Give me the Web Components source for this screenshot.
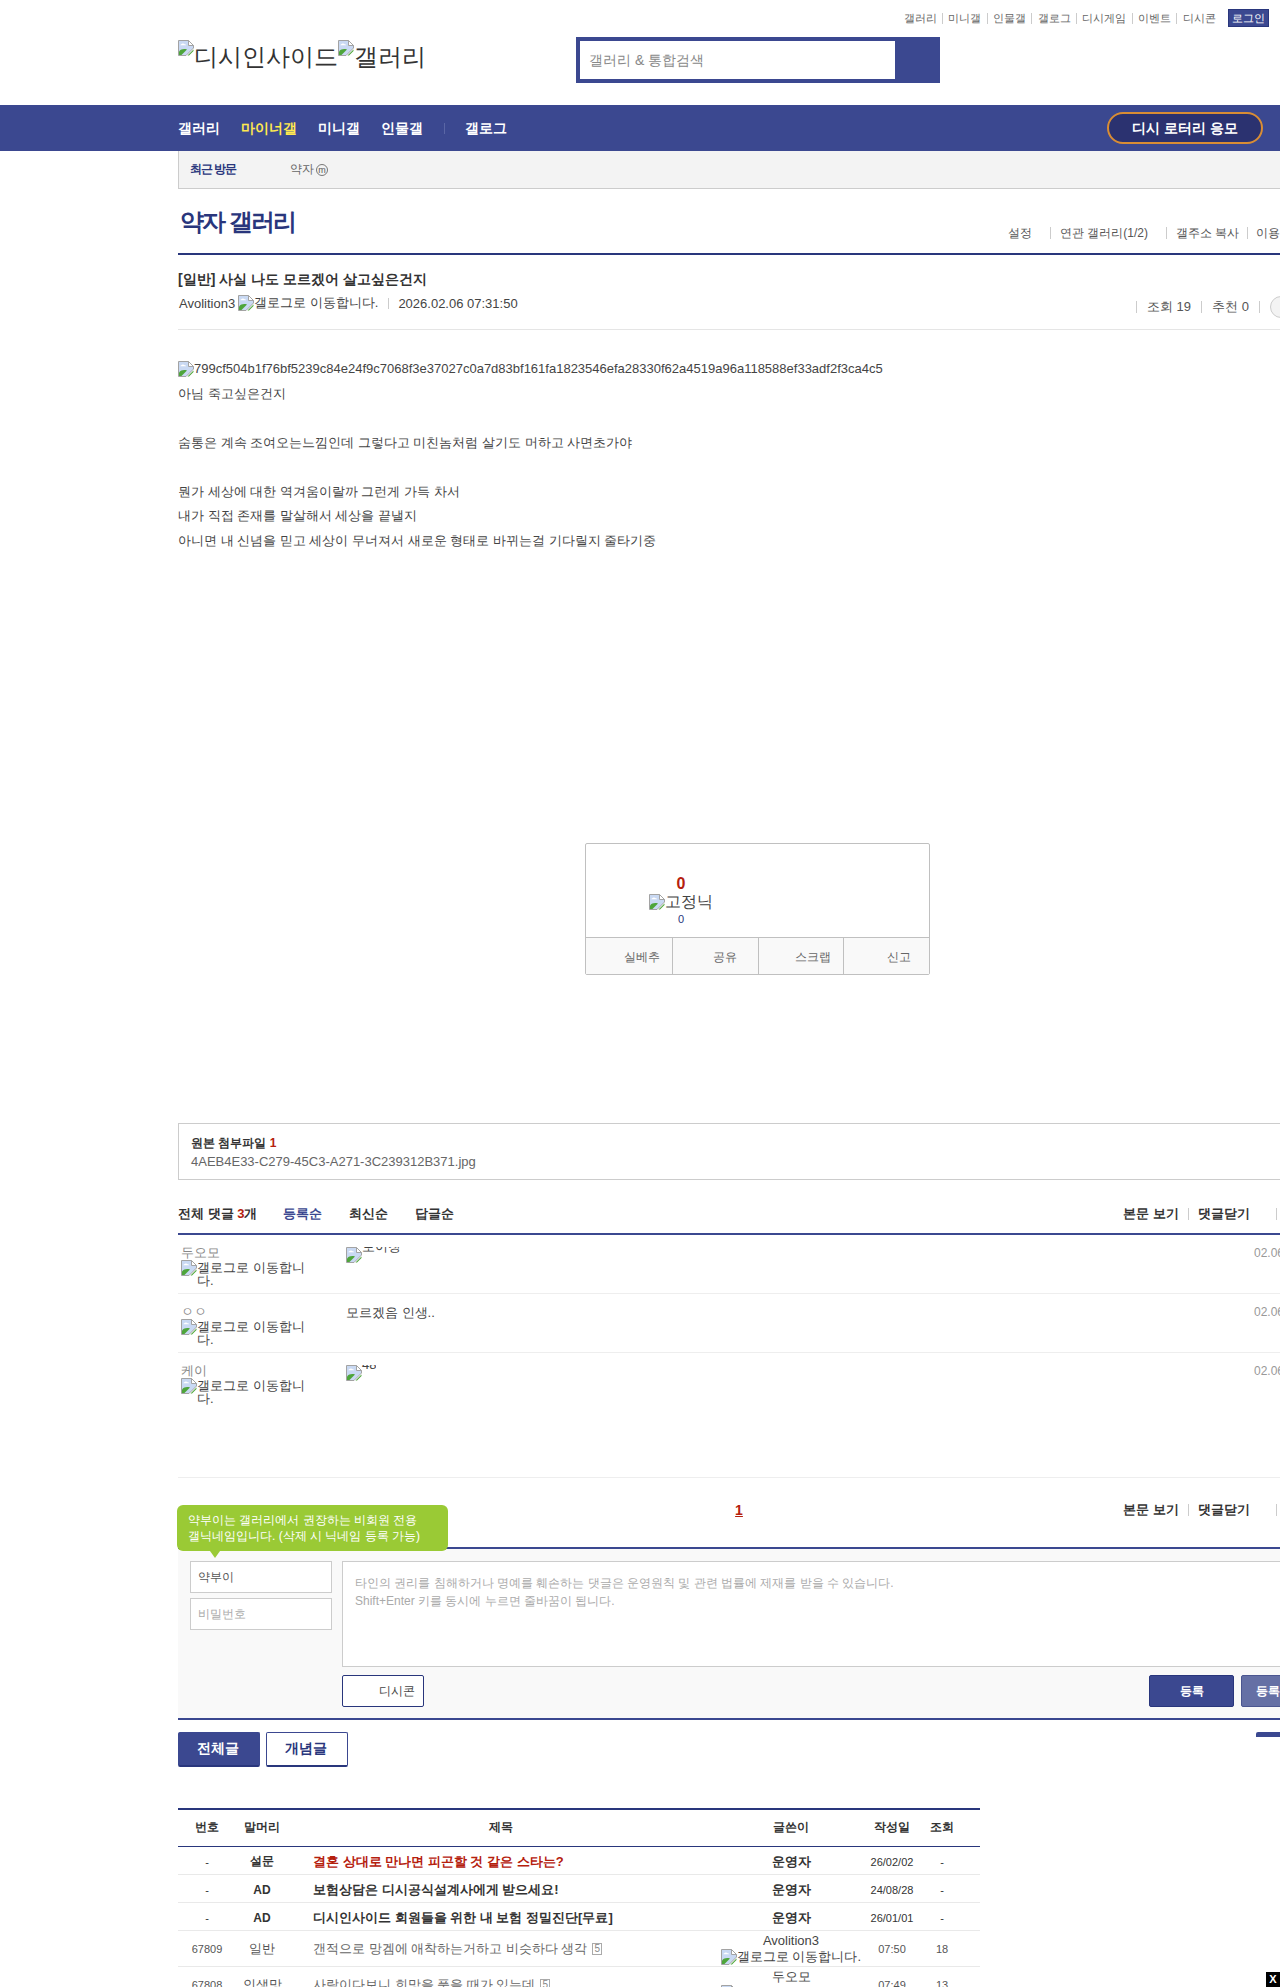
<!DOCTYPE html>
<html lang="ko">
<head>
<meta charset="utf-8">
<title>약자 갤러리</title>
<style>
  html, body { margin: 0; padding: 0; background: #fff; }
  body {
    width: 1280px; height: 1987px; overflow: hidden;
    font-family: "Liberation Sans", sans-serif;
    font-size: 13px; color: #333;
  }
  #wrap { width: 1160px; margin-left: 178px; }
  post-body p { margin: 0; height: 24.5px; }
  post-body broken-img { height: 24.5px; }
</style>
</head>
<body>
<site-header></site-header>
<main-nav></main-nav>
<div id="wrap">
  <recent-bar></recent-bar>
  <gall-title></gall-title>
  <post-head></post-head>
  <post-body>
    <p><broken-img alt="799cf504b1f76bf5239c84e24f9c7068f3e37027c0a7d83bf161fa1823546efa28330f62a4519a96a118588ef33adf2f3ca4c5"></broken-img></p>
    <p>아님 죽고싶은건지</p>
    <p>&nbsp;</p>
    <p>숨통은 계속 조여오는느낌인데 그렇다고 미친놈처럼 살기도 머하고 사면초가야</p>
    <p>&nbsp;</p>
    <p>뭔가 세상에 대한 역겨움이랄까 그런게 가득 차서</p>
    <p>내가 직접 존재를 말살해서 세상을 끝낼지</p>
    <p>아니면 내 신념을 믿고 세상이 무너져서 새로운 형태로 바뀌는걸 기다릴지 줄타기중</p>
  </post-body>
  <vote-box></vote-box>
  <file-box></file-box>
  <comment-head></comment-head>
  <comment-row date="02.06 07:44:02" h="59">
    <span slot="name">두오모</span>
    <broken-img slot="name" alt="갤로그로 이동합니다." wrap></broken-img>
    <broken-img alt="보이창" clipped></broken-img>
  </comment-row>
  <comment-row date="02.06 07:45:27" h="59">
    <span slot="name">ㅇㅇ</span>
    <broken-img slot="name" alt="갤로그로 이동합니다." wrap></broken-img>
    <div style="line-height:16px;margin-top:-1px">모르겠음 인생..</div>
  </comment-row>
  <comment-row date="02.06 07:51:40" h="125">
    <span slot="name">케이</span>
    <broken-img slot="name" alt="갤로그로 이동합니다." wrap></broken-img>
    <broken-img alt="48" clipped></broken-img>
  </comment-row>
  <pager-row></pager-row>
  <comment-form></comment-form>
  <tab-row></tab-row>
  <post-table>
    <list-row kind="notice" num="-" head="설문" date="26/02/02" count="-">
      <span slot="title" style="color:#b5200d">결혼 상대로 만나면 피곤할 것 같은 스타는?</span>
      <span slot="writer">운영자</span>
    </list-row>
    <list-row kind="notice" num="-" head="AD" date="24/08/28" count="-">
      <span slot="title">보험상담은 디시공식설계사에게 받으세요!</span>
      <span slot="writer">운영자</span>
    </list-row>
    <list-row kind="notice" num="-" head="AD" date="26/01/01" count="-">
      <span slot="title">디시인사이드 회원들을 위한 내 보험 정밀진단[무료]</span>
      <span slot="writer">운영자</span>
    </list-row>
    <list-row num="67809" head="일반" date="07:50" count="18" replies="5">
      <span slot="title">갠적으로 망겜에 애착하는거하고 비슷하다 생각</span>
      <span slot="writer">Avolition3</span>
      <broken-img slot="writer" alt="갤로그로 이동합니다."></broken-img>
    </list-row>
    <list-row num="67808" head="인생망" date="07:49" count="13" replies="5">
      <span slot="title">사람이다보니 희망을 품을 때가 있는데</span>
      <span slot="writer">두오모</span>
      <broken-img slot="writer" alt="갤로그로 이동합니다."></broken-img>
    </list-row>
  </post-table>
</div>
<close-badge></close-badge>

<script>
const NAVY = "#3b4890";
const DARK = "#29367c";

// 공통: 마크업을 shadow root에 넣어주는 베이스
class Comp extends HTMLElement {
  connectedCallback() {
    if (this.shadowRoot) return;
    this.attachShadow({ mode: "open" }).innerHTML = this.render();
  }
  attr(name, def = "") {
    return this.hasAttribute(name) ? this.getAttribute(name) : def;
  }
}

// 깨진 이미지 아이콘 + alt 텍스트
class BrokenImg extends Comp {
  render() {
    const alt = this.attr("alt");
    const wrap = this.hasAttribute("wrap");
    const clipped = this.hasAttribute("clipped");
    return `
      <style>
        :host { display: inline-flex; align-items: ${wrap || clipped ? "flex-start" : "center"}; vertical-align: top; }
        svg { width: 16px; height: 16px; flex: none; }
        span { ${wrap ? "word-break: break-all; line-height: 13px; margin-top: 1px;" : ""} }
        :host([clipped]) { height: 16px; overflow: hidden; }
        :host([clipped]) span { line-height: 16px; margin-top: -8px; color: #444; }
      </style>
      <svg viewBox="0 0 16 16" aria-hidden="true">
        <path d="M.5.5H10.5L15.5 5.5V8L8 15.5H.5Z" fill="#c9d9f3" stroke="#a3a3a3" stroke-width="1"/>
        <path d="M10.5.5V5.5H15.5Z" fill="#fff" stroke="#a3a3a3" stroke-width="1"/>
        <path d="M3 4.5c1-1.400 3-1.200 3.600-.2.9 0 1.400.5 1.400 1H2.400c-.1-.4.1-.7.6-.8Z" fill="#fff"/>
        <path d="M1 15V11.500C3 9 6 8.500 9 9.500L3.500 15Z" fill="#4ea53b"/>
        <path d="M15.500 9.500L9.500 15.500H11L15.500 11Z" fill="#4ea53b"/>
      </svg><span>${alt}</span>`;
  }
}

class SiteHeader extends Comp {
  render() {
    const links = ["갤러리", "미니갤", "인물갤", "갤로그", "디시게임", "이벤트", "디시콘"];
    return `
      <style>
        :host { display: block; height: 105px; box-sizing: border-box; }
        .top { display: flex; justify-content: flex-end; align-items: center; height: 18px; padding: 9px 11px 10px 0; font-size: 11px; color: #666; }
        .top a { padding: 0 5.33px; line-height: 11px; border-left: 1px solid #ccc; }
        .top a:first-child { border-left: 0; }
        .login { margin-left: 7px; width: 39px; height: 16px; line-height: 16px; text-align: center; background: ${NAVY}; border: 1px solid ${DARK}; color: #fff; }
        .row { display: grid; grid-template-columns: 398px 364px; padding-left: 178px; }
        .logo { display: flex; align-items: flex-start; padding-top: 3px; font-size: 24px; line-height: 34px; color: #333; white-space: nowrap; }
        .search { box-sizing: border-box; height: 46px; background: ${NAVY}; padding: 4px 45px 4px 4px; }
        .search div { height: 38px; line-height: 38px; background: #fff; padding-left: 9px; font-size: 14px; color: #888; }
      </style>
      <div class="top">
        ${links.map(l => `<a>${l}</a>`).join("")}
        <div class="login">로그인</div>
      </div>
      <div class="row">
        <div class="logo"><broken-img alt="디시인사이드" style="align-items:flex-start"></broken-img><broken-img alt="갤러리" style="align-items:flex-start"></broken-img></div>
        <div class="search"><div>갤러리 &amp; 통합검색</div></div>
      </div>`;
  }
}

class MainNav extends Comp {
  render() {
    return `
      <style>
        :host { display: flex; align-items: center; height: 46px; background: ${NAVY}; padding-left: 178px; color: #fff; font-size: 14px; font-weight: bold; }
        a { margin: 1px 21px 0 0; white-space: nowrap; }
        .on { color: #ffe94f; }
        i { width: 1px; height: 11px; background: #5a66a5; margin: 0 20px 0 0; }
        .lotto { margin: 0 17px 0 auto; box-sizing: border-box; width: 156px; height: 32px; line-height: 28px; text-align: center; background: #2b3270; border: 2px solid #d98d34; border-radius: 16px; }
      </style>
      <a>갤러리</a><a class="on">마이너갤</a><a>미니갤</a><a>인물갤</a><i></i><a>갤로그</a>
      <div class="lotto">디시 로터리 응모</div>`;
  }
}

class RecentBar extends Comp {
  render() {
    return `
      <style>
        :host { display: flex; align-items: center; box-sizing: border-box; height: 38px; background: #f3f3f3; border-left: 1px solid #ccc; border-bottom: 1px solid #ccc; padding-left: 11px; }
        b { width: 100px; font-size: 12px; letter-spacing: -1px; color: ${DARK}; }
        span { font-size: 12px; color: #666; display: flex; align-items: center; gap: 2px; }
        em { display: inline-block; width: 12px; height: 12px; line-height: 10px; border: 1px solid #777; border-radius: 50%; font-size: 9px; text-align: center; font-style: normal; box-sizing: border-box; color: #555; }
      </style>
      <b>최근 방문</b><span>약자 <em>m</em></span>`;
  }
}

class GallTitle extends Comp {
  render() {
    return `
      <style>
        :host { display: grid; grid-template-columns: 830px 1fr; height: 64px; border-bottom: 2px solid ${DARK}; }
        h2 { margin: 20px 0 0 2px; font-size: 24px; line-height: 26px; color: ${DARK}; letter-spacing: -2px; }
        .links { display: flex; align-items: center; height: 16px; margin-top: 36px; font-size: 12px; color: #555; white-space: nowrap; }
        .links i { width: 1px; height: 12px; background: #ccc; }
      </style>
      <h2>약자 갤러리</h2>
      <div class="links">
        <span style="margin-right:18px">설정</span><i></i>
        <span style="margin:0 18px 0 9px">연관 갤러리(1/2)</span><i></i>
        <span style="margin:0 8px 0 9px">갤주소 복사</span><i></i>
        <span style="margin-left:8px">이용 안내</span>
      </div>`;
  }
}

class PostHead extends Comp {
  render() {
    return `
      <style>
        :host { display: grid; grid-template-columns: 958px 1fr; height: 74px; border-bottom: 1px solid #e5e5e5; }
        h3 { margin: 15px 0 7px; font-size: 14px; line-height: 18px; color: #333; }
        .meta { display: flex; align-items: center; height: 16px; padding-left: 1px; font-size: 13px; color: #444; white-space: nowrap; }
        .meta broken-img { margin-left: 3px; }
        .meta i { width: 1px; height: 11px; background: #ccc; margin: 0 9px 0 10px; }
        .right { display: flex; align-items: center; height: 22px; margin-top: 41px; font-size: 13px; color: #555; white-space: nowrap; }
        .right i { width: 1px; height: 12px; background: #ccc; flex: none; }
        .round { flex: none; box-sizing: border-box; width: 60px; height: 22px; margin-left: 10px; background: #f3f3f3; border: 1px solid #ccc; border-radius: 11px; }
      </style>
      <div>
        <h3>[일반] 사실 나도 모르겠어 살고싶은건지</h3>
        <div class="meta">Avolition3<broken-img alt="갤로그로 이동합니다."></broken-img><i></i>2026.02.06 07:31:50</div>
      </div>
      <div class="right">
        <i></i><span style="margin:0 10px">조회 19</span><i></i><span style="margin:0 10px">추천 0</span><i></i><div class="round"></div>
      </div>`;
  }
}

class PostBody extends Comp {
  render() {
    return `
      <style>
        :host { display: block; box-sizing: border-box; height: 513px; padding-top: 27px; font-size: 13px; line-height: 24.5px; color: #444; }
      </style>
      <slot></slot>`;
  }
}

class VoteBox extends Comp {
  render() {
    const cells = [["실베추", 12], ["공유", 21], ["스크랩", 12], ["신고", 18]];
    return `
      <style>
        :host { display: block; box-sizing: border-box; width: 345px; height: 132px; margin: 0 0 148px 407px; border: 1px solid #c0c0c0; border-radius: 2px; background: #fff; }
        .top { box-sizing: border-box; height: 93px; width: 190px; padding-top: 31px; display: flex; flex-direction: column; align-items: center; }
        .n { font-size: 16px; line-height: 18px; font-weight: bold; color: #b5200d; }
        .g { font-size: 16px; line-height: 16px; color: #444; margin-top: 1px; }
        .c { font-size: 11px; line-height: 14px; margin-top: 2px; color: ${DARK}; }
        .cells { display: grid; grid-template-columns: repeat(4, 1fr); height: 36px; overflow: hidden; border-top: 1px solid #c0c0c0; background: #f9f9f9; }
        .cells div { box-sizing: border-box; height: 36px; border-left: 1px solid #c0c0c0; text-align: right; font-size: 12px; line-height: 39px; color: #666; }
        .cells div:first-child { border-left: 0; }
      </style>
      <div class="top">
        <div class="n">0</div>
        <div class="g"><broken-img alt="고정닉"></broken-img></div>
        <div class="c">0</div>
      </div>
      <div class="cells">${cells.map(c => `<div style="padding-right:${c[1]}px">${c[0]}</div>`).join("")}</div>`;
  }
}

class FileBox extends Comp {
  render() {
    return `
      <style>
        :host { display: block; box-sizing: border-box; height: 57px; border: 1px solid #ccc; padding: 10px 12px; }
        b { display: block; font-size: 12px; line-height: 18px; color: #333; }
        b em { font-style: normal; color: #b5200d; }
        span { display: block; font-size: 13px; line-height: 20px; color: #666; }
      </style>
      <b>원본 첨부파일 <em>1</em></b>
      <span>4AEB4E33-C279-45C3-A271-3C239312B371.jpg</span>`;
  }
}

// 본문 보기 / 댓글닫기 링크 묶음
const VIEW_LINKS = `
  <div style="display:flex;align-items:center;font-size:13px;font-weight:bold;color:#333;white-space:nowrap">
    <span>본문 보기</span>
    <i style="width:1px;height:12px;background:#ccc;margin:0 9px"></i>
    <span>댓글닫기</span>
    <i style="width:1px;height:12px;background:#ccc;margin-left:26px"></i>
  </div>`;

class CommentHead extends Comp {
  render() {
    return `
      <style>
        :host { display: grid; grid-template-columns: 945px 1fr; height: 53px; border-bottom: 2px solid ${NAVY}; }
        .row { display: flex; height: 16px; margin-top: 26px; line-height: 16px; font-size: 13px; font-weight: bold; color: #333; white-space: nowrap; }
        em { font-style: normal; color: #b5200d; }
        .on { color: ${NAVY}; }
      </style>
      <div class="row">
        <span style="width:105px">전체 댓글 <em>3</em>개</span>
        <span class="on" style="width:66px">등록순</span>
        <span style="width:66px">최신순</span>
        <span>답글순</span>
      </div>
      <div class="row">${VIEW_LINKS}</div>`;
  }
}

class CommentRow extends Comp {
  render() {
    return `
      <style>
        :host { display: grid; grid-template-columns: 168px 908px 1fr; box-sizing: border-box; height: ${this.attr("h", "59")}px; padding-top: 11px; border-bottom: 1px solid #eee; }
        .name { width: 125px; padding-left: 3px; font-size: 13px; line-height: 14px; color: #888; display: flex; flex-direction: column; align-items: flex-start; }
        .name ::slotted(broken-img) { color: #444; }
        .body { font-size: 13px; color: #444; padding-top: 1px; }
        .date { font-size: 12px; line-height: 14px; color: #999; white-space: nowrap; }
      </style>
      <div class="name"><slot name="name"></slot></div>
      <div class="body"><slot></slot></div>
      <div class="date">${this.attr("date")}</div>`;
  }
}

class PagerRow extends Comp {
  render() {
    return `
      <style>
        :host { display: grid; grid-template-columns: 550px 395px 1fr; height: 69px; }
        .one { width: 20px; margin-top: 24px; margin-right: -21px; text-align: center; justify-self: end; font-size: 14px; line-height: 16px; font-weight: bold; color: #b5200d; text-decoration: underline; }
        .v { margin-top: 24px; line-height: 16px; grid-column: 3; }
      </style>
      <div class="one">1</div>
      <div class="v">${VIEW_LINKS}</div>`;
  }
}

class CommentForm extends Comp {
  render() {
    return `
      <style>
        :host { display: block; position: relative; box-sizing: border-box; height: 173px; background: #f9f9f9; border-top: 2px solid ${NAVY}; border-bottom: 2px solid ${NAVY}; padding: 12px 12px 0; }
        .tip { position: absolute; left: -1px; top: -44px; box-sizing: border-box; width: 271px; height: 46px; padding: 7px 11px; background: #9aca35; border-radius: 6px; color: #fff; font-size: 12px; line-height: 16px; white-space: nowrap; }
        .tip::after { content: ""; position: absolute; left: 33px; top: 46px; border: 5px solid transparent; border-top: 7px solid #9aca35; border-bottom: 0; }
        .grid { display: grid; grid-template-columns: 142px 1fr; column-gap: 10px; }
        .inputs { display: flex; flex-direction: column; gap: 5px; }
        .inputs div { box-sizing: border-box; height: 32px; line-height: 30px; background: #fff; border: 1px solid #ccc; padding-left: 7px; font-size: 12px; color: #aaa; }
        .inputs .v { color: #555; }
        .text { box-sizing: border-box; height: 106px; background: #fff; border: 1px solid #ccc; padding: 12px; font-size: 12px; line-height: 18px; color: #aaa; }
        .btns { display: flex; grid-column: 2; margin-top: 8px; gap: 7px; }
        .btns div { box-sizing: border-box; height: 32px; border-radius: 2px; font-size: 12px; line-height: 30px; text-align: center; white-space: nowrap; }
        .btns .dc { width: 82px; background: #fff; border: 1px solid ${DARK}; color: #444; text-align: right; padding-right: 8px; margin-right: auto; }
        .ok { width: 85px; background: ${NAVY}; border: 1px solid ${DARK}; color: #fff; font-weight: bold; }
        .ok2 { width: 85px; background: #6570a5; border: 1px solid #4b5690; color: #fff; font-weight: bold; }
      </style>
      <div class="tip">약부이는 갤러리에서 권장하는 비회원 전용<br>갤닉네임입니다. (삭제 시 닉네임 등록 가능)</div>
      <div class="grid">
        <div class="inputs">
          <div class="v">약부이</div>
          <div>비밀번호</div>
        </div>
        <div class="text">타인의 권리를 침해하거나 명예를 훼손하는 댓글은 운영원칙 및 관련 법률에 제재를 받을 수 있습니다.<br>Shift+Enter 키를 동시에 누르면 줄바꿈이 됩니다.</div>
        <div class="btns">
          <div class="dc">디시콘</div>
          <div class="ok">등록</div>
          <div class="ok2">등록+추천</div>
        </div>
      </div>`;
  }
}

class TabRow extends Comp {
  render() {
    return `
      <style>
        :host { display: flex; gap: 6px; margin-top: 12px; height: 35px; font-size: 14px; font-weight: bold; }
        div { box-sizing: border-box; width: 82px; height: 35px; padding-right: 2px; line-height: 31px; text-align: center; border: 1px solid ${NAVY}; border-bottom-width: 2px; border-radius: 2px; border-bottom-color: ${DARK}; }
        .on { background: ${NAVY}; color: #fff; }
        .off { background: #fff; color: ${DARK}; }
        .edge { margin-left: auto; width: 82px; height: 5px; background: ${NAVY}; border: 0; border-radius: 2px 2px 0 0; }
      </style>
      <div class="on">전체글</div><div class="off">개념글</div><div class="edge"></div>`;
  }
}

const COLS = "56px 56px 422px 158px 44px 66px";

class PostTable extends Comp {
  render() {
    return `
      <style>
        :host { display: block; width: 802px; margin-top: 41px; border-top: 2px solid ${DARK}; }
        .h { display: grid; grid-template-columns: ${COLS}; height: 36px; line-height: 35px; border-bottom: 1px solid ${DARK}; font-size: 12px; font-weight: bold; color: #333; text-align: center; white-space: nowrap; }
        .h .num { padding-left: 2px; }
        .h .cnt { padding-right: 10px; }
      </style>
      <div class="h"><span class="num">번호</span><span>말머리</span><span>제목</span><span>글쓴이</span><span>작성일</span><span class="cnt">조회</span></div>
      <slot></slot>`;
  }
}

class ListRow extends Comp {
  render() {
    const replies = this.hasAttribute("replies") ? `<em>${this.attr("replies")}</em>` : "";
    return `
      <style>
        :host { display: grid; grid-template-columns: ${COLS}; align-items: center; box-sizing: border-box; height: 36px; border-bottom: 1px solid #e9e9e9; text-align: center; font-size: 11px; color: #555; white-space: nowrap; }
        :host([kind=notice]) { height: 28px; padding-top: 2px; color: #333; }
        .num { padding-left: 2px; }
        .head { font-size: 13px; }
        :host([kind=notice]) .head { font-size: 12px; font-weight: bold; }
        .title { text-align: left; padding-left: 23px; font-size: 13px; color: #666; display: flex; align-items: center; gap: 5px; }
        :host([kind=notice]) .title { font-weight: bold; color: #333; }
        .writer { display: flex; flex-direction: column; align-items: center; font-size: 13px; line-height: 16px; color: #444; }
        :host([kind=notice]) .writer { font-weight: bold; color: #333; }
        .cnt { padding-right: 10px; }
        em { font-style: normal; font-size: 10px; line-height: 10px; border: 1px solid #aaa; padding: 0 1px; color: #888; }
      </style>
      <span class="num">${this.attr("num")}</span>
      <span class="head">${this.attr("head")}</span>
      <div class="title"><slot name="title"></slot>${replies}</div>
      <div class="writer"><slot name="writer"></slot></div>
      <span>${this.attr("date")}</span>
      <span class="cnt">${this.attr("count")}</span>`;
  }
}

class CloseBadge extends Comp {
  render() {
    return `
      <style>
        :host { position: fixed; right: 0; top: 1972px; width: 14px; height: 15px; background: #000; color: #fff; font-size: 11px; line-height: 15px; font-weight: bold; text-align: center; }
      </style>X`;
  }
}

customElements.define("broken-img", BrokenImg);
customElements.define("site-header", SiteHeader);
customElements.define("main-nav", MainNav);
customElements.define("recent-bar", RecentBar);
customElements.define("gall-title", GallTitle);
customElements.define("post-head", PostHead);
customElements.define("post-body", PostBody);
customElements.define("vote-box", VoteBox);
customElements.define("file-box", FileBox);
customElements.define("comment-head", CommentHead);
customElements.define("comment-row", CommentRow);
customElements.define("pager-row", PagerRow);
customElements.define("comment-form", CommentForm);
customElements.define("tab-row", TabRow);
customElements.define("post-table", PostTable);
customElements.define("list-row", ListRow);
customElements.define("close-badge", CloseBadge);
</script>
</body>
</html>
